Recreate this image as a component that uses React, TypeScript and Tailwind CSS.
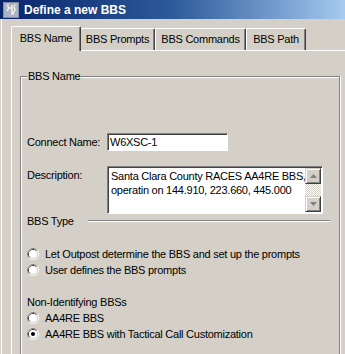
const Radio = ({ checked }: { checked?: boolean }) => (
  <svg width="12" height="12" viewBox="0 0 12 12" className="shrink-0">
    <circle cx="6" cy="6" r="5.5" fill="none" stroke="#ffffff" />
    <path d="M2.11 9.89 A5.5 5.5 0 0 1 9.89 2.11" fill="none" stroke="#808080" />
    <circle cx="6" cy="6" r="4.5" fill="none" stroke="#d4d0c8" />
    <path d="M2.82 9.18 A4.5 4.5 0 0 1 9.18 2.82" fill="none" stroke="#404040" />
    <circle cx="6" cy="6" r="4" fill="#ffffff" />
    {checked && <circle cx="6" cy="6" r="2" fill="#000000" />}
  </svg>
);

const RadioRow = ({ label, checked }: { label: string; checked?: boolean }) => (
  <div className="flex items-center gap-[6px] h-[16px]">
    <Radio checked={checked} />
    <span className="whitespace-nowrap">{label}</span>
  </div>
);

const ScrollButton = ({ up }: { up?: boolean }) => (
  <div className="w-[16px] h-[16px] flex items-center justify-center bg-[#d4d0c8] border border-t-[#d4d0c8] border-l-[#d4d0c8] border-b-[#404040] border-r-[#404040] shadow-[inset_1px_1px_0_#ffffff,inset_-1px_-1px_0_#808080]">
    <svg width="7" height="4" viewBox="0 0 7 4">
      {up ? (
        <path d="M3.5 0 L7 4 L0 4 Z" fill="#808080" />
      ) : (
        <path d="M0 0 L7 0 L3.5 4 Z" fill="#808080" />
      )}
    </svg>
  </div>
);

const tabBase =
  "h-[22px] flex items-center justify-center whitespace-nowrap border-t border-r border-t-white border-r-[#404040] rounded-tr-[2px] shadow-[inset_-1px_0_0_#808080]";

export default function App() {
  return (
    <div className="w-[345px] h-[354px] overflow-hidden bg-[#d4d0c8] text-black text-[11px] tracking-[-0.25px] font-['Liberation_Sans',Arial,sans-serif] flex flex-col">
      {/* title bar */}
      <div className="h-[19px] shrink-0 flex items-center gap-[5px] pl-[3px] bg-linear-to-r from-[#0a246a] via-[#2d5a9a] to-[#a6caf0]">
        <svg width="16" height="16" viewBox="0 0 16 16" className="shrink-0">
          <rect width="16" height="16" fill="#7f8fae" />
          <rect x="1" y="1" width="14" height="14" fill="#a9b4c8" />
          <path d="M4 3 L6 6 L4 9 M6 6 L9 6 M9 3 L9 13 M11 4 L12 8 L10 12" stroke="#f4eee2" strokeWidth="1.5" fill="none" />
          <circle cx="5" cy="3" r="1.3" fill="#e8c9b8" />
          <circle cx="12" cy="3" r="1.3" fill="#e8c9b8" />
        </svg>
        <span className="text-white font-bold text-[12px] tracking-normal whitespace-nowrap">Define a new BBS</span>
      </div>

      {/* window body */}
      <div className="flex-1 flex border-l border-[#d4d0c8]">
        <div className="flex-1 border-l border-white pl-[9px] pt-[7px] flex flex-col">
          {/* tabs */}
          <div className="flex items-end h-[24px] shrink-0">
            <div className="relative z-10 h-[25px] -mb-px flex items-center justify-center w-[70px] pb-[2px] whitespace-nowrap bg-[#d4d0c8] border-l border-t border-r border-l-white border-t-white border-r-[#404040] rounded-t-[2px] shadow-[inset_-1px_0_0_#808080]">
              BBS Name
            </div>
            <div className={`${tabBase} w-[74px]`}>BBS Prompts</div>
            <div className={`${tabBase} border-l border-l-white w-[91px]`}>BBS Commands</div>
            <div className={`${tabBase} border-l border-l-white w-[60px]`}>BBS Path</div>
          </div>

          {/* tab panel */}
          <div className="flex-1 border-l border-t border-white pl-[8px] pt-[25px]">
            <div className="relative h-[300px] w-[320px] border-t border-l border-r border-[#808080] shadow-[inset_1px_1px_0_#ffffff,1px_0_0_#ffffff] pl-[6px] pt-[56px]">
              <span className="absolute -top-[8px] left-[6px] px-[1px] bg-[#d4d0c8] leading-[14px]">BBS Name</span>

              <div className="flex items-center h-[18px]">
                <span className="w-[80px] whitespace-nowrap">Connect Name:</span>
                <div className="w-[121px] h-[18px] bg-white border border-t-[#808080] border-l-[#808080] border-b-white border-r-white shadow-[inset_1px_1px_0_#404040] flex items-center pl-[2px]">
                  W6XSC-1
                </div>
              </div>

              <div className="flex items-start mt-[15px]">
                <span className="w-[80px] pt-[1px]">Description:</span>
                <div className="w-[216px] h-[48px] bg-white border border-t-[#808080] border-l-[#808080] border-b-white border-r-white shadow-[inset_1px_1px_0_#404040] flex pl-[2px] pt-[1px] pr-px pb-px">
                  <div className="flex-1 min-w-0 overflow-hidden whitespace-nowrap pl-px pt-px leading-[14px]">
                    Santa Clara County RACES AA4RE BBS,
                    <br />
                    operatin on 144.910, 223.660, 445.000
                  </div>
                  <div className="w-[16px] shrink-0 flex flex-col">
                    <ScrollButton up />
                    <div className="flex-1 bg-[repeating-conic-gradient(#d4d0c8_0_25%,#ffffff_0_50%)] bg-size-[2px_2px]" />
                    <ScrollButton />
                  </div>
                </div>
              </div>

              <div className="flex items-center h-[14px]">
                <span className="w-[61px]">BBS Type</span>
                <div className="w-[242px] border-t border-[#808080] border-b border-b-white" />
              </div>

              <div className="mt-[18px]">
                <RadioRow label="Let Outpost determine the BBS and set up the prompts" />
                <RadioRow label="User defines the BBS prompts" />
              </div>

              <div className="mt-[16px]">
                <div className="h-[16px] flex items-center">Non-Identifying BBSs</div>
                <RadioRow label="AA4RE BBS" />
                <RadioRow label="AA4RE BBS with Tactical Call Customization" checked />
              </div>
            </div>
          </div>
        </div>
      </div>
    </div>
  );
}
